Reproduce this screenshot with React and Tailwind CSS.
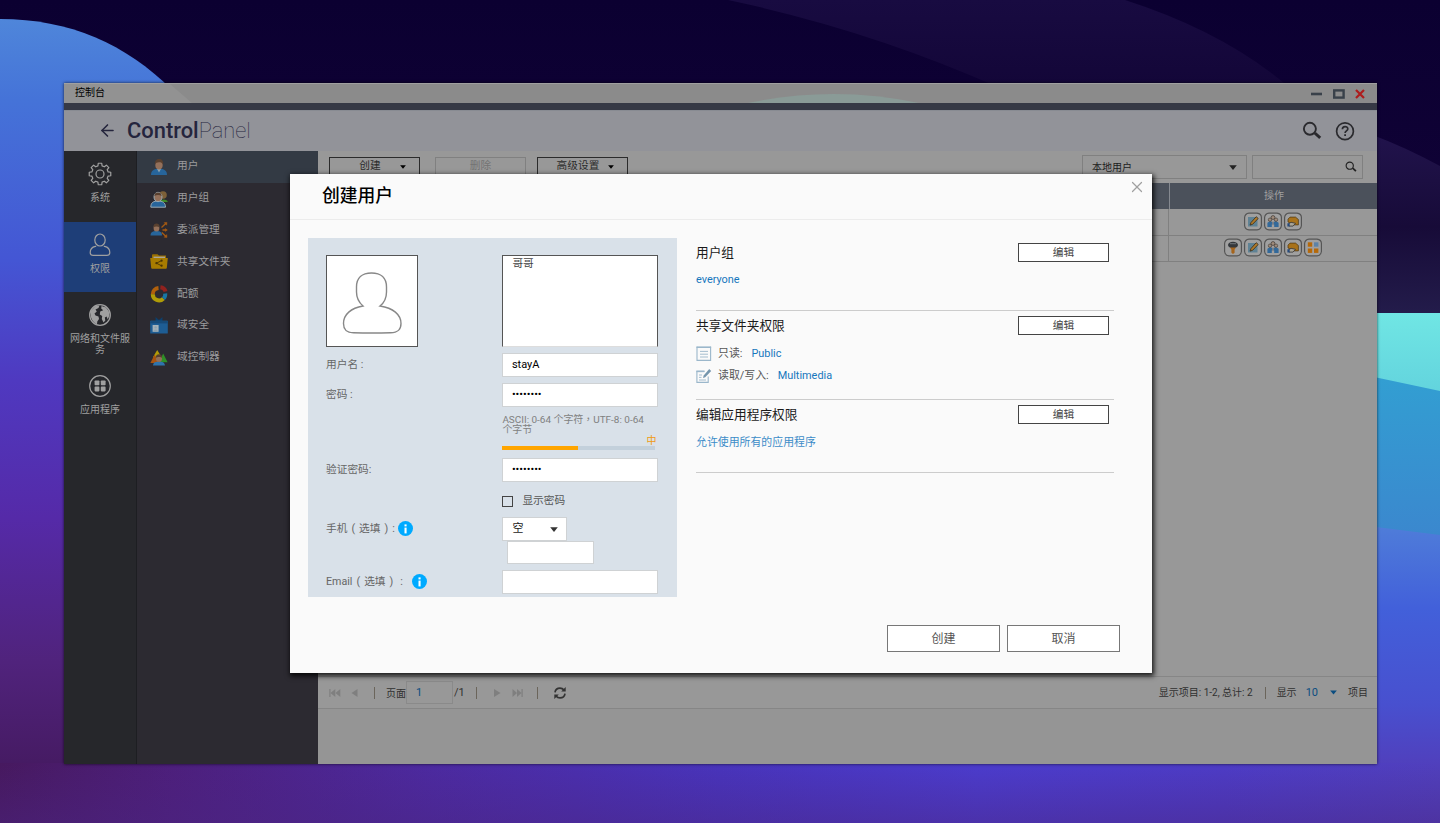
import { ArrowLeft, X } from "lucide-react";

const Wallpaper = () => (
  <svg className="absolute inset-0" width="1440" height="823" viewBox="0 0 1440 823" aria-hidden="true">
    <defs>
      <linearGradient id="sky" x1="0" y1="0" x2="0" y2="1">
        <stop offset="0" stopColor="#0b0031" />
        <stop offset="0.25" stopColor="#100236" />
        <stop offset="1" stopColor="#1c1040" />
      </linearGradient>
      <linearGradient id="leftHill" x1="0" y1="0" x2="0" y2="1">
        <stop offset="0" stopColor="#4f86da" />
        <stop offset="0.1" stopColor="#4573d8" />
        <stop offset="0.3" stopColor="#4456d4" />
        <stop offset="0.45" stopColor="#4f39c0" />
        <stop offset="0.62" stopColor="#552aa8" />
        <stop offset="0.8" stopColor="#50237c" />
        <stop offset="1" stopColor="#401655" />
      </linearGradient>
      <linearGradient id="floor" x1="0" y1="0" x2="1" y2="0">
        <stop offset="0" stopColor="#47195f" />
        <stop offset="0.12" stopColor="#4d1f7c" />
        <stop offset="0.3" stopColor="#4c2aa0" />
        <stop offset="0.5" stopColor="#4834bc" />
        <stop offset="0.68" stopColor="#4b3ccd" />
        <stop offset="0.85" stopColor="#4d3cc6" />
        <stop offset="1" stopColor="#5040bd" />
      </linearGradient>
      <linearGradient id="floorShade" x1="0" y1="0" x2="0" y2="1">
        <stop offset="0" stopColor="#4a2480" stopOpacity="0" />
        <stop offset="1" stopColor="#4a2480" stopOpacity="0.45" />
      </linearGradient>
      <linearGradient id="ridge" x1="0" y1="0" x2="0" y2="1">
        <stop offset="0" stopColor="#180b41" />
        <stop offset="1" stopColor="#130638" />
      </linearGradient>
      <linearGradient id="ridgeRight" x1="0" y1="0" x2="0" y2="1">
        <stop offset="0" stopColor="#21134c" />
        <stop offset="0.5" stopColor="#170b38" />
        <stop offset="1" stopColor="#241d4c" />
      </linearGradient>
      <linearGradient id="cyan" x1="0" y1="0" x2="0" y2="1">
        <stop offset="0" stopColor="#70e6e4" />
        <stop offset="1" stopColor="#62d3dd" />
      </linearGradient>
      <linearGradient id="azure" x1="0" y1="0" x2="0" y2="1">
        <stop offset="0" stopColor="#329fd2" />
        <stop offset="1" stopColor="#3b87ce" />
      </linearGradient>
      <linearGradient id="rightHill" x1="0" y1="0" x2="0" y2="1">
        <stop offset="0" stopColor="#4f7dd9" />
        <stop offset="0.35" stopColor="#4260da" />
        <stop offset="0.75" stopColor="#4850cf" />
        <stop offset="1" stopColor="#5040bd" />
      </linearGradient>
    </defs>
    <rect width="1440" height="823" fill="url(#sky)" />
    <path d="M728 0H1125Q1225 32 1290 88H1000Q870 30 728 0Z" fill="url(#ridge)" />
    <path d="M1370 134Q1405 147 1440 166V320H1370Z" fill="url(#ridgeRight)" />
    <path d="M0 19C70 19 126 44 172 90L330 300V823H0Z" fill="url(#leftHill)" />
    <path d="M1360 313H1440V395H1360Z" fill="url(#cyan)" />
    <path d="M1360 374L1440 391V540H1360Z" fill="url(#azure)" />
    <path d="M1360 525L1440 535V764H1360Z" fill="url(#rightHill)" />
    <rect y="763" width="1440" height="60" fill="url(#floor)" />
    <rect y="763" width="1440" height="60" fill="url(#floorShade)" />
  </svg>
);

// outline of an eight-toothed cog centred on 12,12
const cogPath = (() => {
  const points = [];
  for (let i = 0; i < 8; i++) {
    const mid = (i * Math.PI) / 4;
    [
      [-0.25, 8.4],
      [-0.16, 10.9],
      [0.16, 10.9],
      [0.25, 8.4],
    ].forEach(([offset, r]) => {
      points.push(`${(12 + r * Math.sin(mid + offset)).toFixed(2)} ${(12 - r * Math.cos(mid + offset)).toFixed(2)}`);
    });
  }
  return `M${points.join("L")}Z`;
})();

const GearIcon = () => (
  <svg width="24" height="24" viewBox="0 0 24 24" fill="none" stroke="currentColor" strokeWidth="1.2" strokeLinejoin="round">
    <path d={cogPath} />
    <circle cx="12" cy="12" r="4" />
  </svg>
);

const PersonIcon = () => (
  <svg width="22" height="26" viewBox="0 0 22 26" fill="none" stroke="currentColor" strokeWidth="1.2">
    <ellipse cx="11" cy="8" rx="5.2" ry="6" />
    <path d="M7.2 14.3H6.4C3 15 1.2 17.5 1.2 20.5C1.2 22.5 2 23.3 4 23.3H18C20 23.3 20.8 22.5 20.8 20.5C20.8 17.5 19 15 15.6 14.3H14.8" />
  </svg>
);

const GlobeIcon = () => (
  <svg width="24" height="24" viewBox="0 0 24 24">
    <circle cx="12" cy="12" r="10.3" fill="none" stroke="currentColor" strokeWidth="1.3" />
    <path
      d="M3 7.5L7.5 3L11.5 2.5L10.5 5L7.5 6.5L8.8 8.4L6.5 10.5L7.5 12.5L10.5 13.5L11 16L9.3 18.5L9 21.3C5 19.5 2.8 15.5 2.6 11.5Z"
      fill="currentColor"
    />
    <path
      d="M13.5 3L18 4.6L20.8 8.2L21.4 12.5L19.8 16.5L18.6 13.5L16.8 14.5L17.3 17.5L15.5 19.5L13.8 16L14.2 13L11.8 11.4L12.2 8.5L15.2 7.2L13.2 5.5Z"
      fill="currentColor"
    />
  </svg>
);

const AppsIcon = () => (
  <svg width="24" height="24" viewBox="0 0 24 24">
    <circle cx="12" cy="12" r="10.3" fill="none" stroke="currentColor" strokeWidth="1.2" />
    <g fill="currentColor">
      <rect x="6.6" y="6.4" width="4.8" height="4.8" rx="0.8" />
      <rect x="12.8" y="6.4" width="4.8" height="4.8" rx="0.8" />
      <rect x="6.6" y="12.6" width="4.8" height="4.8" rx="0.8" />
      <rect x="12.8" y="12.6" width="4.8" height="4.8" rx="0.8" />
    </g>
  </svg>
);

const UserIcon = () => (
  <svg width="18" height="18" viewBox="0 0 18 18">
    <path d="M1 17C1 12.5 4 10.8 9 10.8S17 12.5 17 17Z" fill="#27659b" />
    <path d="M6.8 10.5L9 14.5L11.2 10.5Z" fill="#8fa3ad" />
    <ellipse cx="9" cy="7" rx="3.7" ry="4.4" fill="#94705a" />
    <path d="M5 6.5C4.6 2.8 6.5 1 9.2 1S13.6 3 13 6.5C12.2 4.8 11 4.3 9 4.3S5.8 5 5 6.5Z" fill="#59402f" />
  </svg>
);

const GroupIcon = () => (
  <svg width="18" height="18" viewBox="0 0 18 18">
    <path d="M9 12C10 8.5 17.6 8.5 17.8 12Z" fill="#3f8a25" />
    <circle cx="13" cy="5" r="3.8" fill="#7d6038" />
    <path d="M0.8 17.2C0.8 12.5 3.5 11 8 11S15.5 12.5 15.5 17.2Z" fill="#27659b" stroke="#9caab2" strokeWidth="1" />
    <ellipse cx="8" cy="7" rx="4" ry="4.7" fill="#94705a" stroke="#9caab2" strokeWidth="1" />
    <path d="M4.4 6C4.4 3.4 6 2.6 8 2.6S11.6 3.4 11.6 6C9.6 4.8 6.4 4.8 4.4 6Z" fill="#59402f" />
  </svg>
);

const DelegateIcon = () => (
  <svg width="18" height="18" viewBox="0 0 18 18">
    <path d="M0.5 14.5C0.5 11 3 10 6.5 10S12 11 12 14.5Z" fill="#27659b" />
    <ellipse cx="6.5" cy="7" rx="2.9" ry="3.5" fill="#94705a" />
    <path d="M3.4 6.4C3.4 3.5 4.8 2.6 6.5 2.6S9.6 3.5 9.6 6.4C8 5.2 5 5.2 3.4 6.4Z" fill="#59402f" />
    <g stroke="#a65a12" strokeWidth="1.3" fill="#a65a12">
      <path d="M11.5 6.5L16 2.3M12.5 9H16.3M11.8 11.5L16 15.5" />
      <path d="M14.2 1.6L17 1.4L16.6 4.2ZM15.2 7.6L17.4 9L15.2 10.4ZM16.7 13.6L17 16.4L14.2 16.2Z" strokeWidth="0.5" />
    </g>
  </svg>
);

const ShareFolderIcon = () => (
  <svg width="18" height="18" viewBox="0 0 18 18">
    <path d="M2 2.4C2 1.4 2.5 1.2 3.5 1.2H7.5L9 2.6H16V6H2Z" fill="#9b7100" />
    <path d="M3.5 3.6H15V6H3.5Z" fill="#a9a69c" />
    <path d="M0.2 5H17.8L16.8 15C16.7 15.6 16.4 15.8 15.8 15.8H2.2C1.6 15.8 1.3 15.6 1.2 15Z" fill="#a87c00" />
    <path d="M11.5 7.6L6.5 10.2L11.5 12.8" fill="none" stroke="#4c3603" strokeWidth="0.9" />
    <g fill="#4c3603">
      <circle cx="11.6" cy="7.7" r="1.1" />
      <circle cx="6.4" cy="10.2" r="1.1" />
      <circle cx="11.6" cy="12.7" r="1.1" />
    </g>
  </svg>
);

const QuotaIcon = () => (
  <svg width="18" height="18" viewBox="0 0 18 18" fill="none" strokeWidth="4">
    <path d="M8.5 3A6.2 6.2 0 0 0 2.8 9.4" stroke="#b0600c" />
    <path d="M2.8 9.2A6.2 6.2 0 0 0 13.4 13.6" stroke="#b09c08" />
    <path d="M13.4 13.6A6.2 6.2 0 0 0 15.2 8.4" stroke="#1976a3" />
    <path d="M10.4 2.2A6 6 0 0 1 15.6 6.6" stroke="#92221e" />
  </svg>
);

const DomainSecurityIcon = () => (
  <svg width="18" height="18" viewBox="0 0 18 18">
    <path d="M5.6 0L9 3L12.4 0L12.5 5H5.5Z" fill="#0d3f6c" />
    <rect x="0.2" y="3.8" width="17.6" height="12.8" rx="0.6" fill="#1e5d94" />
    <rect x="0.2" y="3.8" width="17.6" height="2.6" fill="#174a78" />
    <rect x="2.6" y="8" width="6" height="6.8" fill="#a6b2ba" />
    <circle cx="5.6" cy="10.4" r="1.2" fill="#8da2b0" />
    <path d="M3.4 14.2C3.6 12 7.6 12 7.8 14.2Z" fill="#8da2b0" />
  </svg>
);

const DomainControllerIcon = () => (
  <svg width="18" height="18" viewBox="0 0 18 18">
    <path d="M7.2 1L11.8 8.4H2.8Z" fill="#b39b07" />
    <path d="M4.6 5.5L9 14H0.4Z" fill="#a85410" />
    <path d="M13.2 4.5L17.6 13.2H9Z" fill="#2f8f26" />
    <path d="M3 16.6C3.2 13 6 12.4 9 12.4S14.6 13 15 16.6Z" fill="#2e74ad" />
    <ellipse cx="9" cy="9.6" rx="3" ry="3.5" fill="#94705a" />
    <path d="M5.8 9C5.8 6 7.2 5.2 9 5.2S12.2 6 12.2 9C10.8 7.8 7.2 7.8 5.8 9Z" fill="#59402f" />
  </svg>
);

const SearchIcon = ({ className = "", size = 20 }) => (
  <svg className={className} width={size} height={size} viewBox="0 0 20 20" fill="none" stroke="currentColor">
    <circle cx="7.9" cy="7.8" r="6" strokeWidth="1.9" />
    <path d="M12.8 12L18.2 16.8" strokeWidth="3" />
  </svg>
);

const SyncIcon = () => (
  <svg className="ml-[15px] text-[#333]" width="14" height="14" viewBox="0 0 14 14" fill="none" stroke="currentColor" strokeWidth="1.7">
    <path d="M2 6.4C2.4 3.6 4.5 2.1 7 2.1C8.7 2.1 10 2.8 11 4" />
    <path d="M12 7.6C11.6 10.4 9.5 11.9 7 11.9C5.3 11.9 4 11.2 3 10" />
    <path d="M12.7 1V5.6H8.2ZM1.3 13V8.4H5.8Z" fill="currentColor" stroke="none" />
  </svg>
);

const categories = [
  { label: "系统", icon: <GearIcon /> },
  { label: "权限", icon: <PersonIcon />, active: true },
  { label: "网络和文件服务", icon: <GlobeIcon /> },
  { label: "应用程序", icon: <AppsIcon /> },
];

const menuItems = [
  { label: "用户", icon: <UserIcon />, active: true },
  { label: "用户组", icon: <GroupIcon /> },
  { label: "委派管理", icon: <DelegateIcon /> },
  { label: "共享文件夹", icon: <ShareFolderIcon /> },
  { label: "配额", icon: <QuotaIcon /> },
  { label: "域安全", icon: <DomainSecurityIcon /> },
  { label: "域控制器", icon: <DomainControllerIcon /> },
];

const Caret = ({ className = "" }) => (
  <svg className={className} width="8" height="5" viewBox="0 0 8 5" fill="currentColor">
    <path d="M0.2 0.2H7.8L4 4.9Z" />
  </svg>
);

const actionArt = {
  password: (
    <>
      <ellipse cx="9" cy="6.4" rx="5" ry="3.2" fill="#34383c" />
      <path d="M6 9H12L10.6 11V14.2L9 15.6L7.4 14.2V11Z" fill="#a5641c" />
      <path d="M6 5.2H12" stroke="#70757a" />
    </>
  ),
  edit: (
    <>
      <rect x="4" y="4.5" width="9.5" height="9.5" fill="#5f8294" />
      <path d="M6 12.6L7 10L12.2 4.2L14.2 6L8.6 11.8Z" fill="#b07a2a" stroke="#3a2b16" strokeWidth="0.8" />
    </>
  ),
  group: (
    <>
      <path d="M3.4 14.4V10.2L6.2 8.4L9 9.8L11.8 8.4L14.6 10.2V14.4H10.2V12H7.8V14.4Z" fill="#33699a" />
      <circle cx="6" cy="7.2" r="1.7" fill="#a08c7c" stroke="#3c352f" strokeWidth="0.6" />
      <circle cx="12" cy="7.2" r="1.7" fill="#a08c7c" stroke="#3c352f" strokeWidth="0.6" />
      <circle cx="9" cy="5" r="1.9" fill="#a08c7c" stroke="#3c352f" strokeWidth="0.7" />
      <path d="M9 9V12.4" stroke="#9b8b80" strokeWidth="1.2" />
    </>
  ),
  share: (
    <>
      <path d="M4 6.6L6 4.6H11.5L14.4 7V12.4H10L4 9.5Z" fill="#a8721a" stroke="#4a3512" strokeWidth="0.7" />
      <path d="M4.5 11.4L7 9.8L11.5 10.8L9 13.6H5Z" fill="#aaa597" stroke="#333" strokeWidth="0.8" />
      <rect x="3.4" y="10.8" width="2.2" height="3.2" fill="#254a7c" />
    </>
  ),
  apps: (
    <>
      <rect x="3.8" y="3.8" width="4.4" height="4.4" fill="#b5690a" />
      <rect x="10" y="3.8" width="4.4" height="4.4" fill="#5d83a8" />
      <rect x="3.8" y="10" width="4.4" height="4.4" fill="#b5690a" />
      <rect x="10" y="10" width="4.4" height="4.4" fill="#b5690a" />
    </>
  ),
};

const ActionIcon = ({ name }) => (
  <svg width="20" height="19" viewBox="-1 -0.5 20 19">
    <path
      d="M5 0.6H13Q17.4 1.2 17.4 5V13Q17 17 13 17.4H5Q1 17 0.6 13V5Q1 1 5 0.6Z"
      fill="#a0a0a0"
      stroke="#555"
      strokeWidth="1.2"
    />
    {actionArt[name]}
  </svg>
);

const ToolbarButton = ({ label, disabled, menu }) => (
  <div
    className={`flex h-[19px] w-[91px] items-center border text-[10.7px] ${
      disabled ? "border-[#808080] text-[#737373]" : "border-[#2b2b2b] text-[#2b2b2b]"
    }`}
  >
    <span className={`flex-1 text-center ${menu ? "pl-[10px]" : ""}`}>{label}</span>
    {menu && <Caret className="mr-[13px] h-[4px] w-[6px] text-black" />}
  </div>
);

const InfoBadge = () => (
  <span className="-mt-px flex h-[15px] w-[15px] items-center justify-center rounded-full bg-[#00aaff]">
    <svg width="5" height="10" viewBox="0 0 5 10" fill="#fff">
      <rect x="1.5" y="0.4" width="2.1" height="2" />
      <rect x="1.5" y="3.6" width="2.1" height="5.8" />
    </svg>
  </span>
);

const TextField = ({ value, className = "" }) => (
  <div className={`flex h-[24px] items-center border border-[#cfd2d4] bg-white px-[8.5px] pt-px text-[11px] text-black ${className}`}>
    {value}
  </div>
);

const EditButton = () => (
  <button className="mr-[5px] h-[19px] w-[91px] border border-[#444] bg-white pt-px text-[10.7px] leading-none text-[#444]">编辑</button>
);

const Section = ({ title, className = "", children }) => (
  <section className={`border-b-[1.5px] border-[#cccccc] ${className}`}>
    <div className="flex items-center justify-between">
      <h3 className="text-[12.7px] leading-[19px] text-[#1a1a1a]">{title}</h3>
      <EditButton />
    </div>
    {children}
  </section>
);

const ReadOnlyIcon = () => (
  <svg width="16" height="16" viewBox="0 0 16 16" fill="none" stroke="#9bb7cb">
    <path d="M1 0.8V14.4H14.6V0.8" strokeWidth="1.1" />
    <path d="M0.5 1.2H15.1" strokeWidth="1.6" />
    <path d="M4 5.4H12M4 8.2H12M4 11H12" strokeWidth="0.9" />
  </svg>
);

const ReadWriteIcon = () => (
  <svg width="16" height="16" viewBox="0 0 16 16" fill="none" stroke="#9bb7cb">
    <path d="M8.5 3.2H0.9V14.4H12.2V8.5" strokeWidth="1.1" />
    <path d="M0.4 3.4H8.5" strokeWidth="1.5" />
    <path d="M3 7H6M3 9.4H5.5M3 12H10" strokeWidth="0.9" />
    <path d="M13.2 1L15.2 3L9.2 9.2L7 10L7.7 7.5Z" fill="#7596ad" stroke="none" />
  </svg>
);

const CreateUserDialog = () => (
  <div className="absolute left-[290px] top-[174px] flex h-[499px] w-[862px] flex-col bg-[#fafafa] shadow-[1px_2px_5px_1px_rgba(0,0,0,0.85)]">
    <div className="flex h-[46px] shrink-0 items-center justify-between border-b border-[#ececec] pl-8 pr-[6px]">
      <h2 className="-mt-[2px] text-[17.8px] leading-none font-medium text-black">创建用户</h2>
      <X className="-mt-[19px] text-[#a0a0a0]" size={18} strokeWidth={1.6} />
    </div>

    <div className="flex pl-[18px] pt-[18px]">
      <div className="h-[359px] w-[369px] bg-[#d9e1e9] pl-[18px] pt-[17px] text-[10.7px] text-[#666]">
        <div className="flex h-[98px]">
          <div className="w-[176.4px]">
            <div className="h-[92px] w-[92px] border border-[#555] bg-white">
              <svg width="90" height="90" viewBox="0 0 90 90" fill="none" stroke="#888" strokeWidth="1.4">
                <path d="M36 50C32 46.5 29.5 42.5 29.5 36V31C29.5 22 35 17 44.5 17S59.5 22 59.5 31V36C59.5 42.5 57.5 46.5 53 50C66 52 74 58.5 74 67.5C74 74 71 76.5 63.5 76.7C52 77.1 38 77.1 26.5 76.7C19.5 76.5 16.5 74 16.5 67.5C16.5 58.5 24 52 36 50Z" />
              </svg>
            </div>
          </div>
          <div className="h-[92px] w-[156px] border border-[#555] border-b-[#ddd] bg-white px-[9px] text-[10.7px] leading-[16px] text-[#444]">
            哥哥
          </div>
        </div>

        <div className="flex h-[30px]">
          <div className="w-[176.4px] leading-[24px]">用户名 :</div>
          <TextField value="stayA" className="w-[156px]" />
        </div>
        <div className="flex h-[30px]">
          <div className="w-[176.4px] leading-[24px]">密码 :</div>
          <TextField value="••••••••" className="w-[156px]" />
        </div>

        <div className="ml-[176.4px] h-[45px] w-[156px] pt-[2px] text-[9.95px] leading-[10px] text-[#808080]">
          <p className="pr-2 font-['Roboto','Noto_Sans_CJK_TC',sans-serif]">ASCII: 0-64 个字符，UTF-8: 0-64 个字节</p>
          <p className="pr-[2px] text-right text-[10px] leading-[11px] text-[#f09a10]">中</p>
          <div className="h-[4px] w-[153px] bg-[#c3d0db]">
            <div className="h-full w-[76px] bg-[#ffa500]"></div>
          </div>
        </div>

        <div className="flex h-[30px]">
          <div className="w-[176.4px] leading-[24px]">验证密码:</div>
          <TextField value="••••••••" className="w-[156px]" />
        </div>
        <label className="ml-[176.4px] flex h-[29px] items-center pb-[3px] text-[#555]">
          <span className="mr-[9px] h-[11px] w-[11px] border border-[#444]"></span>
          显示密码
        </label>

        <div className="flex h-[53px]">
          <div className="flex h-[24px] w-[176.4px] items-center">
            <span>手机</span>
            <span className="ml-[4px]">(</span>
            <span className="ml-[4px]">选填</span>
            <span className="ml-[4px]">)</span>
            <span className="ml-[4px] mr-[3px]">:</span>
            <InfoBadge />
          </div>
          <div>
            <div className="flex h-[24px] w-[65px] items-center justify-between border border-[#cfd2d4] bg-white pl-[9px] pr-[8px] pt-px text-[11px] text-[#222]">
              空
              <Caret className="text-[#333]" />
            </div>
            <div className="ml-[5px] h-[23px] w-[87px] border border-[#cfd2d4] bg-white"></div>
          </div>
        </div>
        <div className="flex h-[26px]">
          <div className="flex h-[24px] w-[176.4px] items-center">
            <span>Email</span>
            <span className="ml-[4px]">(</span>
            <span className="ml-[4px]">选填</span>
            <span className="ml-[4px]">)</span>
            <span className="ml-[7px] mr-[9px]">:</span>
            <InfoBadge />
          </div>
          <TextField className="w-[156px]" />
        </div>
      </div>

      <div className="ml-[19px] w-[418px] text-[10.9px] text-[#555]">
        <Section title="用户组" className="h-[73px] pt-[5px]">
          <p className="mt-[9px] leading-[18px] text-[#1777bd]">everyone</p>
        </Section>
        <Section title="共享文件夹权限" className="h-[89px] pt-[5px]">
          <div className="mt-[8px] flex h-[22px] items-center">
            <ReadOnlyIcon />
            <span className="ml-[6px]">只读:</span>
            <span className="ml-[9px] text-[#1777bd]">Public</span>
          </div>
          <div className="flex h-[22px] items-center">
            <ReadWriteIcon />
            <span className="ml-[6px]">读取/写入:</span>
            <span className="ml-[9px] text-[#1777bd]">Multimedia</span>
          </div>
        </Section>
        <Section title="编辑应用程序权限" className="h-[73px] pt-[5px]">
          <p className="mt-[9px] leading-[20px] text-[#3c8cc8]">允许使用所有的应用程序</p>
        </Section>
      </div>
    </div>

    <div className="mt-[28px] flex justify-end gap-[7px] pr-[32px] text-[12px] text-[#555]">
      <button className="h-[27px] w-[113px] border border-[#777] bg-white">创建</button>
      <button className="h-[27px] w-[113px] border border-[#777] bg-white">取消</button>
    </div>
  </div>
);

const Divider = ({ className = "" }) => <span className={`h-[12px] w-px bg-[#6b655b] ${className}`}></span>;

const Pager = () => (
  <div className="flex h-[33px] items-center border-y border-[#868686] text-[10px] text-[#303030]">
    <svg className="ml-[11px] text-[#7f7f7f]" width="30" height="10" viewBox="0 0 30 10" fill="currentColor">
      <path d="M0.3 1H1.5V9H0.3ZM6.3 1V9L1.5 5ZM11.3 1V9L6.5 5ZM28.5 1V9L22.5 5Z" />
    </svg>
    <Divider className="ml-[15px]" />
    <span className="ml-[11px] pt-px">页面</span>
    <span className="flex h-[23px] w-[47px] items-center border border-[#8a8a8a] pl-[9px] pt-[2px] text-[11px] text-[#0b4d80]">1</span>
    <span className="ml-[1px] pt-[2px] text-[11px]">/1</span>
    <Divider className="ml-[11px]" />
    <svg className="ml-[16px] text-[#7f7f7f]" width="30" height="10" viewBox="0 0 30 10" fill="currentColor">
      <path d="M1 1V9L7.5 5ZM19.5 1V9L24 5ZM24 1V9L28.5 5ZM28.5 1H29.7V9H28.5Z" />
    </svg>
    <Divider className="ml-[14px]" />
    <SyncIcon />

    <span className="ml-auto">显示项目: 1-2, 总计: 2</span>
    <Divider className="ml-[12px]" />
    <span className="ml-[11px]">显示</span>
    <span className="ml-[9px] pt-[2px] text-[11px] text-[#0b4d80]">10</span>
    <Caret className="ml-[12px] w-[7px] text-[#0b4d80]" />
    <span className="ml-[11px] mr-[9px]">项目</span>
  </div>
);

export default function App() {
  return (
    <div className="relative h-[823px] w-[1440px] overflow-hidden pl-[64px] pt-[83px] font-['Roboto','Noto_Sans_CJK_SC',sans-serif]">
      <Wallpaper />

      <div className="relative flex h-[681px] w-[1313px] flex-col bg-[#989898] shadow-[0_0_3px_rgba(0,0,0,0.7)]">
        <div className="relative flex h-[20px] shrink-0 items-center justify-between border-t border-[#a0a0a0] bg-[#8b8b8b] px-[11px] text-[10px] text-black">
          <svg className="absolute inset-0" width="1313" height="19" viewBox="0 0 1313 19">
            <path d="M0 0H106L128 19H0Z" fill="#929292" />
            <path d="M684 19Q770 1 855 19Z" fill="#8a9b97" />
          </svg>
          <span className="relative -mt-[2px]">控制台</span>
          <svg className="relative" width="56" height="12" viewBox="0 0 56 12" fill="none">
            <path d="M1 6H12" stroke="#39414a" strokeWidth="2.6" />
            <rect x="24.2" y="2.4" width="9.4" height="7.2" stroke="#39414a" strokeWidth="2.4" />
            <path d="M46 2L54 10M54 2L46 10" stroke="#ad1c1c" strokeWidth="2.2" />
          </svg>
        </div>
        <div className="h-[8px] shrink-0 border-b border-[#888b92] bg-[#363945]"></div>

        <div className="flex h-[40px] shrink-0 items-center bg-[#929399] pb-px pl-[34px] pr-[22px]">
          <ArrowLeft className="text-[#25253d]" size={19} strokeWidth={2} />
          <h1 className="ml-[10px] text-[21.9px] leading-none text-[#25253d]">
            <span className="font-medium">Control</span>
            <span className="font-thin">Panel</span>
          </h1>
          <SearchIcon className="ml-auto text-[#2a2a2e]" />
          <svg className="ml-[13px] text-[#2a2a2e]" width="20" height="20" viewBox="0 0 20 20" fill="none" stroke="currentColor">
            <circle cx="10" cy="10.2" r="8.4" strokeWidth="1.7" />
            <path d="M7.4 8.3C7.4 4.6 12.8 4.8 12.8 8C12.8 10 10.1 9.9 10.1 12.1" strokeWidth="1.7" />
            <path d="M10.1 13.3V15.1" strokeWidth="1.8" />
          </svg>
        </div>

        <div className="flex min-h-0 flex-1">
          <nav className="w-[73px] shrink-0 border-r border-[#1d1e22] bg-[#26272b] text-[#a0a0a0]">
            {categories.map(({ label, icon, active }) => (
              <div
                key={label}
                className={`flex h-[70.5px] flex-col items-center px-[5px] pt-[11px] text-center text-[10px] leading-[11px] ${
                  active ? "bg-[#1e3e78]" : ""
                }`}
              >
                <span className="flex h-[24px] items-center">{icon}</span>
                <span className="mt-[6px]">{label}</span>
              </div>
            ))}
          </nav>

          <nav className="w-[181px] shrink-0 bg-[#2c2a31] text-[10.7px] text-[#9b9b9d]">
            {menuItems.map(({ label, icon, active }) => (
              <div key={label} className={`flex h-[31.8px] items-center pl-[13px] ${active ? "bg-[#333a44]" : ""}`}>
                {icon}
                <span className="ml-[9px] -mt-px">{label}</span>
              </div>
            ))}
          </nav>

          <main className="flex min-w-0 flex-1 flex-col">
            <div className="flex h-[32px] items-start pl-[11px] pr-[14px] pt-[6px]">
              <ToolbarButton label="创建" menu />
              <div className="ml-[15px]">
                <ToolbarButton label="删除" disabled />
              </div>
              <div className="ml-[11px]">
                <ToolbarButton label="高级设置" menu />
              </div>
              <div className="-mt-[2px] ml-auto flex h-[24px] w-[165px] items-center justify-between border border-[#808080] px-[9px] text-[10px] text-[#1c1c1c]">
                本地用户
                <Caret className="text-[#222]" />
              </div>
              <div className="-mt-[2px] ml-[5px] flex h-[24px] w-[111px] items-center justify-end border border-[#808080] pr-[5px]">
                <SearchIcon size={12} className="text-[#222]" />
              </div>
            </div>

            <div className="flex h-[26px] bg-[#4b515b] text-[10px] text-[#a0a0a0]">
              <div className="w-[852px] border-r border-[#858990]"></div>
              <div className="flex flex-1 items-center justify-center pb-px pl-px">操作</div>
            </div>
            <div className="flex h-[27px] border-b border-[#808080]">
              <div className="w-[851px] border-r border-[#808080]"></div>
              <div className="flex flex-1 items-center justify-center pb-[2px]">
                <ActionIcon name="edit" />
                <ActionIcon name="group" />
                <ActionIcon name="share" />
              </div>
            </div>
            <div className="flex h-[26px] border-b border-[#808080]">
              <div className="w-[851px] border-r border-[#808080]"></div>
              <div className="flex flex-1 items-center justify-center pb-[2px]">
                <ActionIcon name="password" />
                <ActionIcon name="edit" />
                <ActionIcon name="group" />
                <ActionIcon name="share" />
                <ActionIcon name="apps" />
              </div>
            </div>
            <div className="flex-1"></div>
            <Pager />
            <div className="h-[55px] bg-[#959595]"></div>
          </main>
        </div>
      </div>

      <CreateUserDialog />
    </div>
  );
}
